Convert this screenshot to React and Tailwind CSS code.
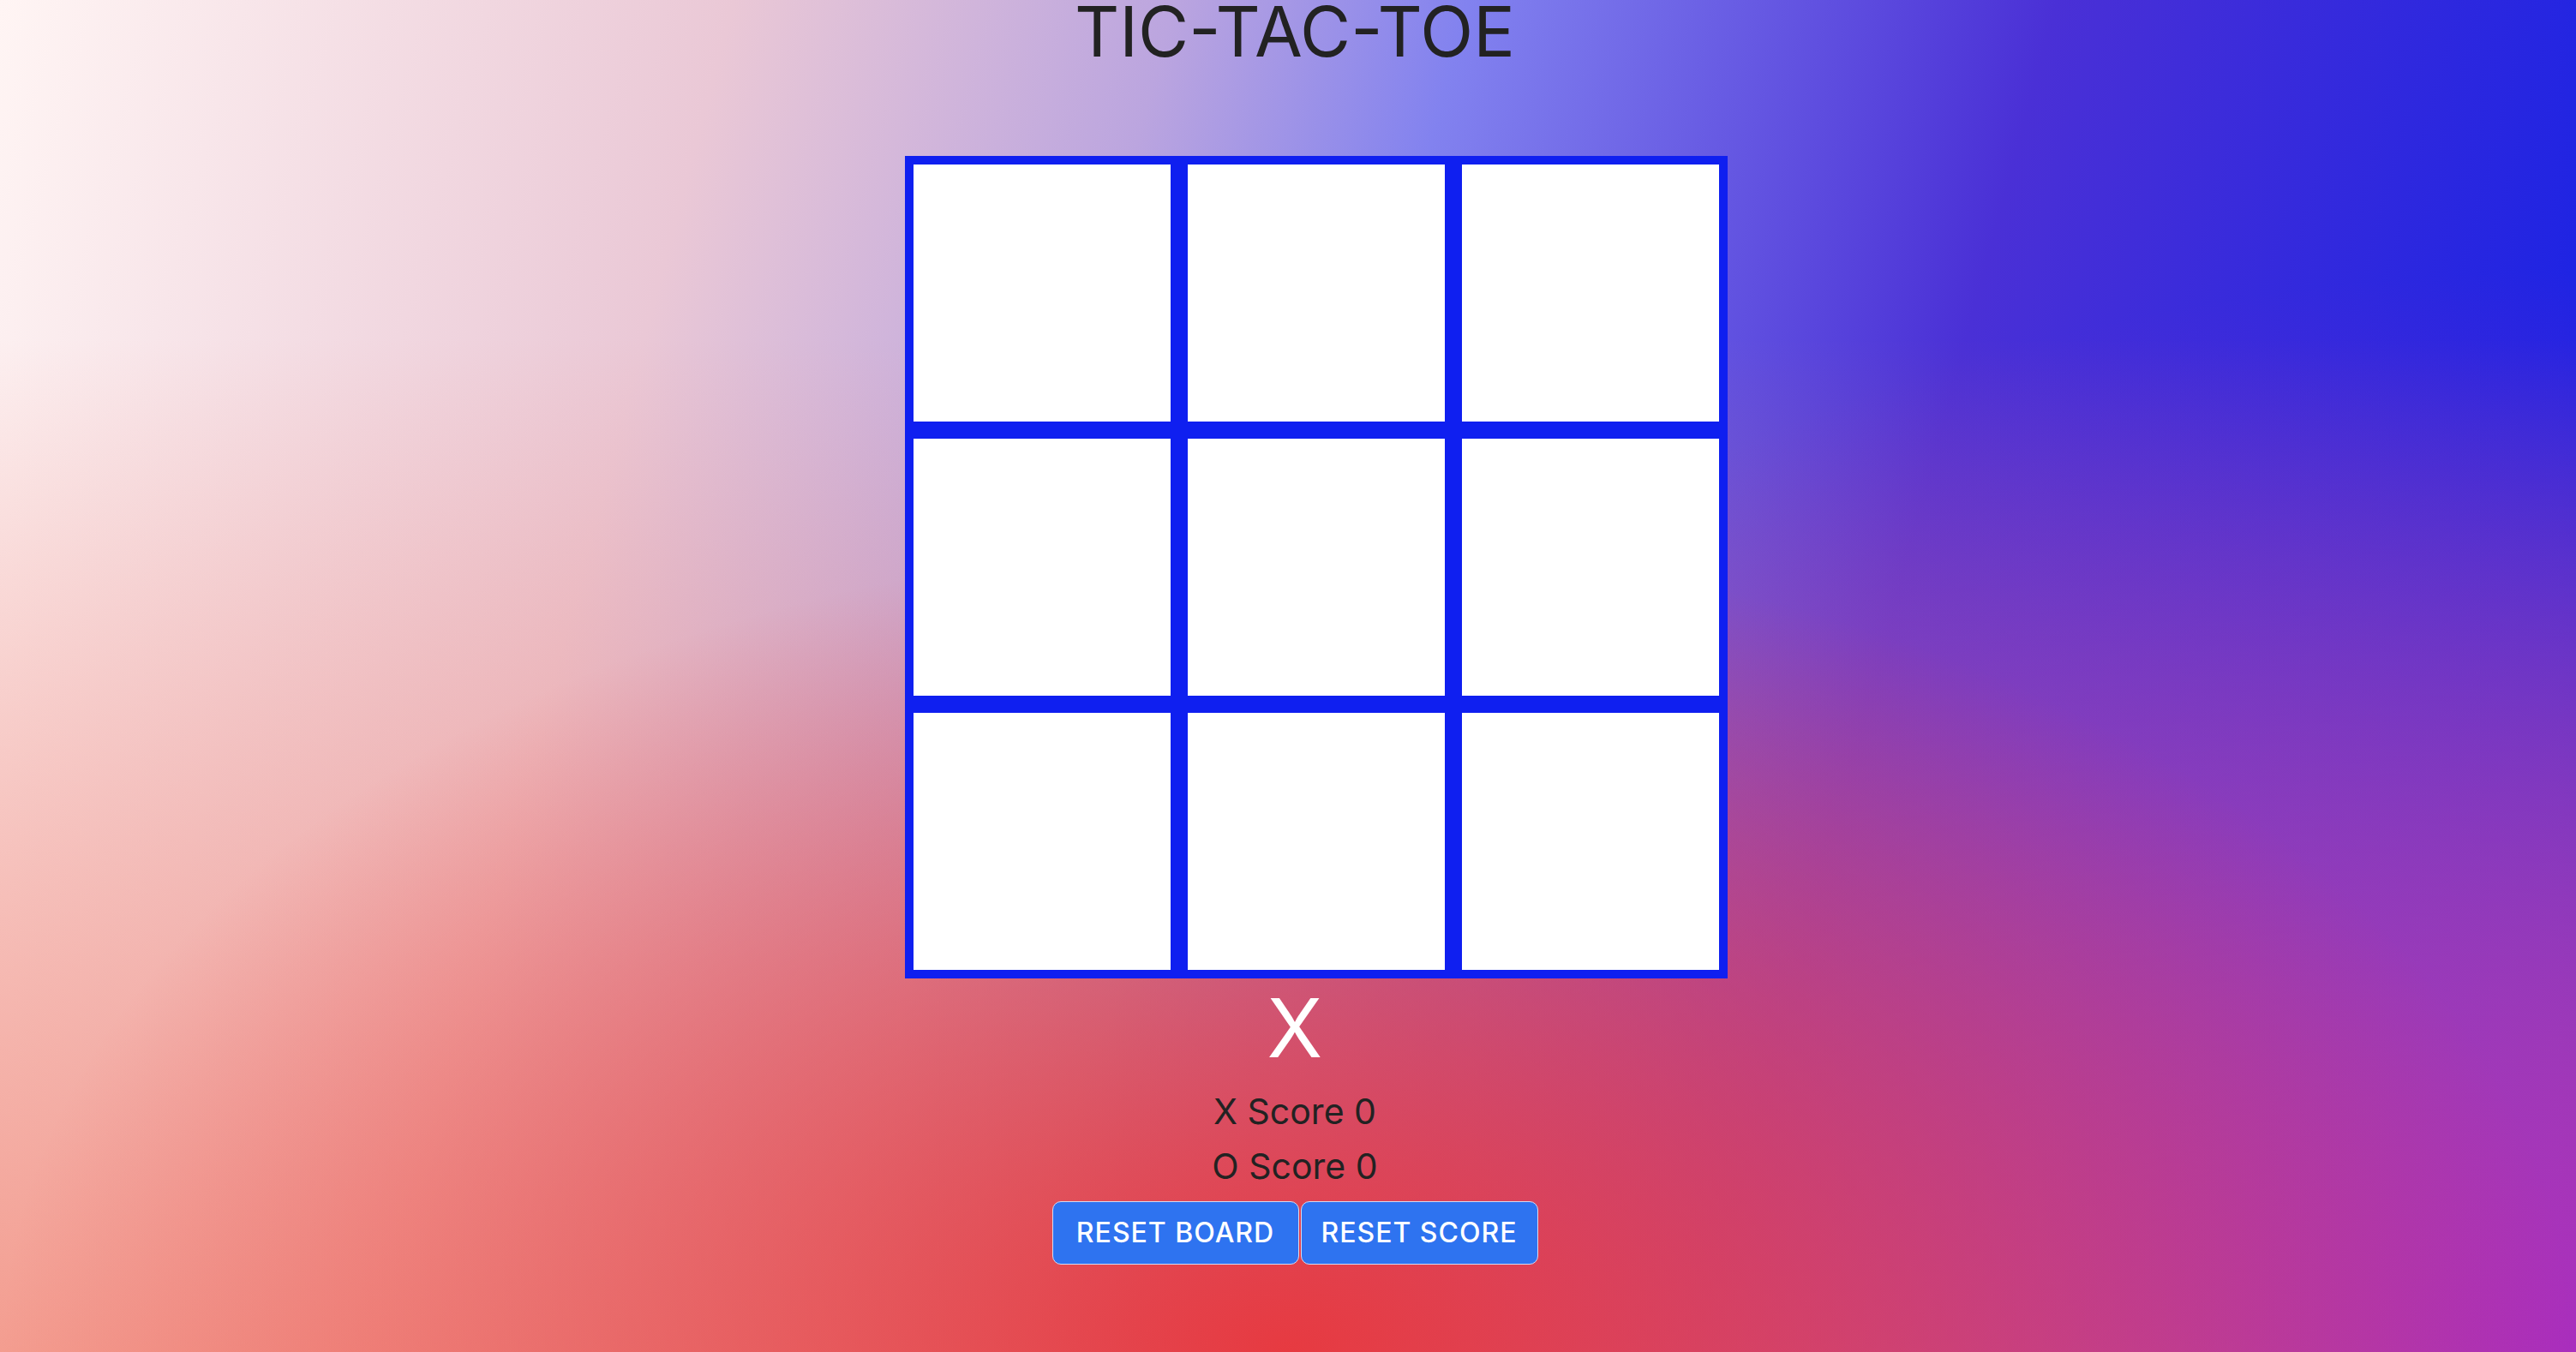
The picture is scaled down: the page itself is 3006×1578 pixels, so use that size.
import { useState } from "react";

const Cell = ({ value, onClick }) => (
  <button
    onClick={onClick}
    className="w-[300px] h-[300px] bg-white flex items-center justify-center text-[180px] leading-none text-[#111]"
  >
    {value}
  </button>
);

const App = () => {
  const [board, setBoard] = useState(Array(9).fill(""));
  const [turn, setTurn] = useState("X");
  const [score, setScore] = useState({ X: 0, O: 0 });

  const play = (i) => {
    if (board[i]) return;
    const next = [...board];
    next[i] = turn;
    setBoard(next);
    setTurn(turn === "X" ? "O" : "X");
  };

  return (
    <div
      className="min-h-screen w-full pl-[16px] flex flex-col items-center text-[#222] font-['Inter','Liberation_Sans',sans-serif] bg-[radial-gradient(ellipse_50%_60%_at_50%_100%,rgba(232,55,60,0.95),rgba(232,55,60,0)),radial-gradient(ellipse_60%_80%_at_100%_100%,rgba(168,42,192,0.95),rgba(168,42,192,0)),linear-gradient(to_top,rgba(243,135,115,0.75),rgba(243,150,140,0)_75%),linear-gradient(105deg,#fff5f4_0%,#eac8d6_25%,#bba5df_40%,#8282ef_50%,#4a30d6_70%,#0a1ee9_100%)]"
    >
      {/* Title */}
      <h1 className="text-[81px] leading-[75px] font-normal">TIC-TAC-TOE</h1>

      {/* Board */}
      <div className="mt-[107px] ml-[50px] p-[10px] bg-[#0f1ff0] grid grid-cols-3 gap-[20px]">
        {board.map((v, i) => (
          <Cell key={i} value={v} onClick={() => play(i)} />
        ))}
      </div>

      {/* Current turn */}
      <div className="mt-[10px] text-[95px] leading-none text-white">{turn}</div>

      {/* Scores */}
      <div className="mt-[30px] text-[41px] leading-none">X Score {score.X}</div>
      <div className="mt-[23px] text-[41px] leading-none">O Score {score.O}</div>

      {/* Controls */}
      <div className="mt-[20px] flex gap-[2px]">
        <button
          onClick={() => {
            setBoard(Array(9).fill(""));
            setTurn("X");
          }}
          className="w-[288px] h-[74px] flex items-center justify-center rounded-[10px] border-[1.5px] border-[#d3daf2] bg-[#2e73f0] text-white text-[32px] font-medium leading-none tracking-[1px]"
        >
          RESET BOARD
        </button>
        <button
          onClick={() => setScore({ X: 0, O: 0 })}
          className="w-[277px] h-[74px] flex items-center justify-center rounded-[10px] border-[1.5px] border-[#d3daf2] bg-[#2e73f0] text-white text-[32px] font-medium leading-none tracking-[1px]"
        >
          RESET SCORE
        </button>
      </div>
    </div>
  );
};

export default App;
